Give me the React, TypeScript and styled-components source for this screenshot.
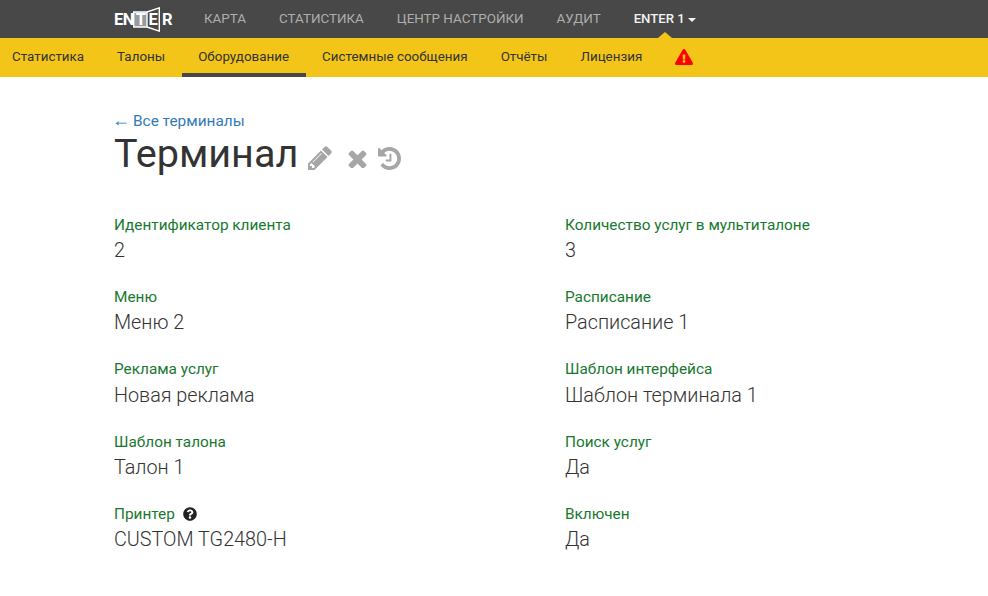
import React from "react";
import styled, { createGlobalStyle } from "styled-components";
import { FaExclamationTriangle, FaQuestionCircle } from "react-icons/fa";

const GlobalStyle = createGlobalStyle`
  html, body {
    margin: 0;
    padding: 0;
    background: #fff;
    font-family: Roboto, "Liberation Sans", sans-serif;
    color: #333;
  }
`;

const TopBar = styled.header`
  height: 38px;
  background: #484848;
  display: flex;
  align-items: center;
  padding-left: 114px;
`;

const Logo = styled.div`
  position: relative;
  display: flex;
  align-items: center;
  width: 58px;
  height: 25px;
  margin-right: 15.5px;
  color: #fff;
  font-size: 16.5px;
  font-weight: 700;
  line-height: 25px;

  svg {
    position: absolute;
    left: 19px;
    top: 0;
  }
`;

const LogoPart = styled.span<{ $width: number; $gap?: number }>`
  position: relative;
  display: block;
  width: ${(p) => p.$width}px;
  margin-left: ${(p) => p.$gap ?? 0}px;
  text-align: center;
  letter-spacing: -0.5px;
`;

const TopLink = styled.a<{ $active?: boolean }>`
  position: relative;
  padding: 0 16.5px;
  font-size: ${(p) => (p.$active ? "13.2px" : "13.4px")};
  line-height: 38px;
  font-weight: ${(p) => (p.$active ? 500 : 400)};
  color: ${(p) => (p.$active ? "#f2f2f2" : "#aeaeae")};
  text-transform: uppercase;
  white-space: nowrap;
`;

const Caret = styled.span`
  display: inline-block;
  margin-left: 3px;
  vertical-align: middle;
  border-top: 4px solid #f2f2f2;
  border-left: 4px solid transparent;
  border-right: 4px solid transparent;
`;

const Notch = styled.span`
  position: absolute;
  left: 50%;
  bottom: 0;
  margin-left: -7px;
  border-bottom: 6px solid #f2c518;
  border-left: 7px solid transparent;
  border-right: 7px solid transparent;
`;

const SubBar = styled.nav`
  height: 39px;
  background: #f2c518;
  display: flex;
  align-items: stretch;
`;

const SubLink = styled.a<{ $active?: boolean }>`
  padding: 0 16.5px;
  font-size: 13.4px;
  line-height: 38px;
  color: #333;
  box-sizing: border-box;
  border-bottom: 4px solid ${(p) => (p.$active ? "#484848" : "transparent")};
  white-space: nowrap;

  &:first-child {
    padding-left: 12px;
  }
`;

const Warning = styled.span`
  display: flex;
  align-items: center;
  padding: 0 16.5px 2px;
  color: #f00;
  font-size: 18px;
`;

const Content = styled.main`
  padding: 35px 0 0 114px;
`;

const BackLink = styled.a`
  display: flex;
  align-items: baseline;
  height: 18px;
  font-size: 15.4px;
  line-height: 17px;
  color: #337ab7;
`;

const Arrow = styled.span`
  width: 21px;
  margin-left: -2px;
  font-family: "Liberation Sans", sans-serif;
  font-size: 18px;
`;

const TitleRow = styled.div`
  display: flex;
  align-items: center;
  height: 47px;
`;

const Title = styled.h1`
  margin: 0;
  font-size: 39.6px;
  font-weight: 400;
  line-height: 47px;
  color: #333;
`;

const ActionIcon = styled.svg<{ $gap: number }>`
  display: block;
  flex: none;
  margin-left: ${(p) => p.$gap}px;
  margin-top: 9px;
  fill: #a6a6a6;
`;

const Fields = styled.section`
  display: grid;
  grid-template-columns: 451px 1fr;
  grid-auto-rows: 72.2px;
  margin-top: 39px;
`;

const Field = styled.div`
  display: flex;
  flex-direction: column;
`;

const Label = styled.div`
  display: flex;
  align-items: center;
  gap: 8px;
  height: 18px;
  font-size: 15.35px;
  line-height: 18px;
  color: #19782f;
`;

const Help = styled.span`
  display: flex;
  color: #222;
  font-size: 14px;
`;

const Value = styled.div`
  margin-top: 5.2px;
  font-size: 19.8px;
  line-height: 24px;
  font-weight: 300;
  color: #333;
`;

const fields: { label: string; value: string; help?: boolean }[] = [
  { label: "Идентификатор клиента", value: "2" },
  { label: "Количество услуг в мультиталоне", value: "3" },
  { label: "Меню", value: "Меню 2" },
  { label: "Расписание", value: "Расписание 1" },
  { label: "Реклама услуг", value: "Новая реклама" },
  { label: "Шаблон интерфейса", value: "Шаблон терминала 1" },
  { label: "Шаблон талона", value: "Талон 1" },
  { label: "Поиск услуг", value: "Да" },
  { label: "Принтер", value: "CUSTOM TG2480-H", help: true },
  { label: "Включен", value: "Да" },
];

export default function App() {
  return (
    <>
      <GlobalStyle />
      <TopBar>
        <Logo>
          <svg width="27" height="25" viewBox="0 0 27 25">
            <path d="M.7 5 H14 V20 H.7 Z" fill="#9a9a9a" stroke="#fff" strokeWidth="1.4" />
            <path d="M14 5 L26.3.9 V24.1 L14 20" fill="none" stroke="#fff" strokeWidth="1.4" />
          </svg>
          <LogoPart $width={19}>EN</LogoPart>
          <LogoPart $width={15}>T</LogoPart>
          <LogoPart $width={10}>E</LogoPart>
          <LogoPart $width={10} $gap={4}>R</LogoPart>
        </Logo>
        <TopLink>Карта</TopLink>
        <TopLink>Статистика</TopLink>
        <TopLink>Центр настройки</TopLink>
        <TopLink>Аудит</TopLink>
        <TopLink $active>
          Enter 1<Caret />
          <Notch />
        </TopLink>
      </TopBar>
      <SubBar>
        <SubLink>Статистика</SubLink>
        <SubLink>Талоны</SubLink>
        <SubLink $active>Оборудование</SubLink>
        <SubLink>Системные сообщения</SubLink>
        <SubLink>Отчёты</SubLink>
        <SubLink>Лицензия</SubLink>
        <Warning>
          <FaExclamationTriangle />
        </Warning>
      </SubBar>
      <Content>
        <BackLink>
          <Arrow>←</Arrow>
          Все терминалы
        </BackLink>
        <TitleRow>
          <Title>Терминал</Title>
          <ActionIcon $gap={10} width="24" height="24" viewBox="128 128 1536 1536">
            <path d="M491 1536l91-91-235-235-91 91v107h128v128h107zm523-928q0-22-22-22-10 0-17 7l-542 542q-7 7-7 17 0 22 22 22 10 0 17-7l542-542q7-7 7-17zm-54-192l416 416-832 832h-416v-416zm683 96q0 53-37 90l-166 166-416-416 166-165q36-38 90-38 53 0 91 38l235 234q37 39 37 91z" />
          </ActionIcon>
          <ActionIcon $gap={16} width="19" height="19" viewBox="296 266 1200 1260">
            <path d="M1490 1322q0 40-28 68l-136 136q-28 28-68 28t-68-28l-294-294-294 294q-28 28-68 28t-68-28l-136-136q-28-28-28-68t28-68l294-294-294-294q-28-28-28-68t28-68l136-136q28-28 68-28t68 28l294 294 294-294q28-28 68-28t68 28l136 136q28 28 28 68t-28 68l-294 294 294 294q28 28 28 68z" />
          </ActionIcon>
          <ActionIcon $gap={11} width="23" height="23" viewBox="128 128 1536 1536">
            <path d="M1664 896q0 156-61 298t-164 245-245 164-298 61q-172 0-327-72.5t-264-204.5q-7-10-6.5-22.5t8.5-20.5l137-138q10-9 25-9 16 2 23 12 73 95 179 147t225 52q104 0 198.5-40.5t163.5-109.5 109.5-163.5 40.5-198.5-40.5-198.5-109.5-163.5-163.5-109.5-198.5-40.5q-98 0-188 35.5t-160 101.5l137 138q31 30 14 69-17 40-59 40h-448q-26 0-45-19t-19-45v-448q0-42 40-59 39-17 69 14l130 129q107-101 244.5-156.5t284.5-55.5q156 0 298 61t245 164 164 245 61 298zm-640-288v448q0 14-9 23t-23 9h-320q-14 0-23-9t-9-23v-64q0-14 9-23t23-9h224v-352q0-14 9-23t23-9h64q14 0 23 9t9 23z" />
          </ActionIcon>
        </TitleRow>
        <Fields>
          {fields.map((f) => (
            <Field key={f.label}>
              <Label>
                {f.label}
                {f.help && (
                  <Help>
                    <FaQuestionCircle />
                  </Help>
                )}
              </Label>
              <Value>{f.value}</Value>
            </Field>
          ))}
        </Fields>
      </Content>
    </>
  );
}
